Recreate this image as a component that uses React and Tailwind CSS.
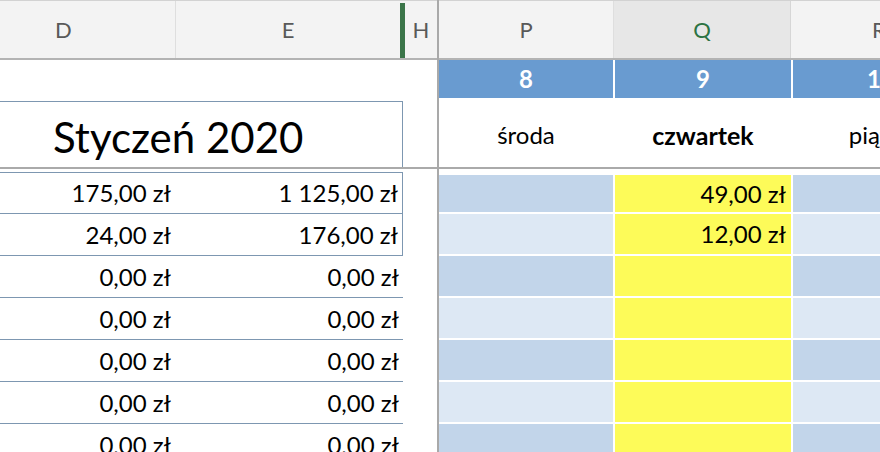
import React from 'react';

const leftRows = [
    ['175,00 zł', '1 125,00 zł'],
    ['24,00 zł', '176,00 zł'],
    ['0,00 zł', '0,00 zł'],
    ['0,00 zł', '0,00 zł'],
    ['0,00 zł', '0,00 zł'],
    ['0,00 zł', '0,00 zł'],
    ['0,00 zł', '0,00 zł'],
];

const rightRows = ['49,00 zł', '12,00 zł', '', '', '', '', ''];

const LeftPane = () => (
    <div className="w-[439px] shrink-0 border-r-2 border-[#a9a9a9] flex flex-col">
        {/* column headers */}
        <div className="h-[60px] shrink-0 flex border-t border-[#d2d2d2] border-b-2 border-b-[#b3b3b3] bg-[#f3f3f3] text-[22px] text-[#595959]">
            <div className="w-[176px] border-r border-[#dedede] flex items-center pl-[55px]">D</div>
            <div className="w-[224px] flex items-center justify-center">E</div>
            <div className="w-[5px] mt-[2px] bg-[#3b7549]" />
            <div className="flex-1 flex items-center justify-center">H</div>
        </div>

        <div className="h-[40px] shrink-0" />

        <div className="h-[69px] shrink-0 border-b-2 border-[#aaaaaa]">
            <div className="mt-[1px] h-[66px] w-[403px] border-t border-r border-[#7d97b1] flex items-center pl-[53px] pt-[4px] text-[42px] text-black">
                Styczeń 2020
            </div>
        </div>

        <div className="h-[3px] shrink-0" />

        {leftRows.map(([d, e], i) => (
            <div
                key={i}
                className={`h-[42px] w-[403px] shrink-0 flex items-center text-[24px] text-black border-b border-[#7d97b1] ${i === 0 ? 'border-t' : ''} ${i < 2 ? 'border-r' : ''}`}
            >
                <div className="w-[176px] text-right pr-[5px]">{d}</div>
                <div className="flex-1 text-right pr-[4px]">{e}</div>
            </div>
        ))}
    </div>
);

const RightPane = () => {
    const cols = [
        { key: 'P', w: 'w-[174px]', day: 'środa', num: '8' },
        { key: 'Q', w: 'w-[176px]', day: 'czwartek', num: '9' },
        { key: 'R', w: 'w-[176px]', day: 'piątek', num: '10' },
    ];

    return (
        <div className="flex-1 overflow-hidden flex flex-col">
            {/* column headers */}
            <div className="h-[60px] shrink-0 flex border-t border-[#d2d2d2] border-b-2 border-b-[#b3b3b3] bg-[#f3f3f3] text-[22px] text-[#595959]">
                <div className="w-[175px] shrink-0 border-r border-[#dedede] flex items-center justify-center">P</div>
                <div className="w-[177px] shrink-0 border-r border-[#d6d6d6] bg-[#e7e7e7] text-[#2c7343] flex items-center justify-center">Q</div>
                <div className="w-[176px] shrink-0 flex items-center justify-center">R</div>
            </div>

            <div className="h-[40px] shrink-0 flex gap-[2px]">
                {cols.map((c) => (
                    <div key={c.key} className={`${c.w} shrink-0 h-[38px] bg-[#699bd0] text-white font-bold text-[24px] flex items-center justify-center`}>
                        {c.num}
                    </div>
                ))}
            </div>

            <div className="h-[69px] shrink-0 border-b-2 border-[#aaaaaa] flex gap-[2px]">
                {cols.map((c) => (
                    <div
                        key={c.key}
                        className={`${c.w} shrink-0 flex items-center justify-center pt-[3px] text-black ${c.key === 'Q' ? 'font-bold text-[25px]' : 'text-[24px]'}`}
                    >
                        {c.day}
                    </div>
                ))}
            </div>

            <div className="flex flex-col gap-[2px] pt-[6px]">
                {rightRows.map((v, i) => {
                    const bg = i % 2 === 0 ? 'bg-[#c2d5ea]' : 'bg-[#dde8f4]';
                    return (
                        <div key={i} className={`${i === 0 ? 'h-[37px]' : 'h-[40px]'} shrink-0 flex gap-[2px]`}>
                            <div className={`w-[174px] shrink-0 ${bg}`} />
                            <div className="w-[176px] shrink-0 bg-[#fdfb59] flex items-center justify-end pr-[5px] text-[24px] text-black">
                                {v}
                            </div>
                            <div className={`w-[176px] shrink-0 ${bg}`} />
                        </div>
                    );
                })}
            </div>
        </div>
    );
};

export default function App() {
    return (
        <div className="w-[880px] h-[452px] overflow-hidden bg-white flex font-['Lato',sans-serif] leading-none">
            <LeftPane />
            <RightPane />
        </div>
    );
}
